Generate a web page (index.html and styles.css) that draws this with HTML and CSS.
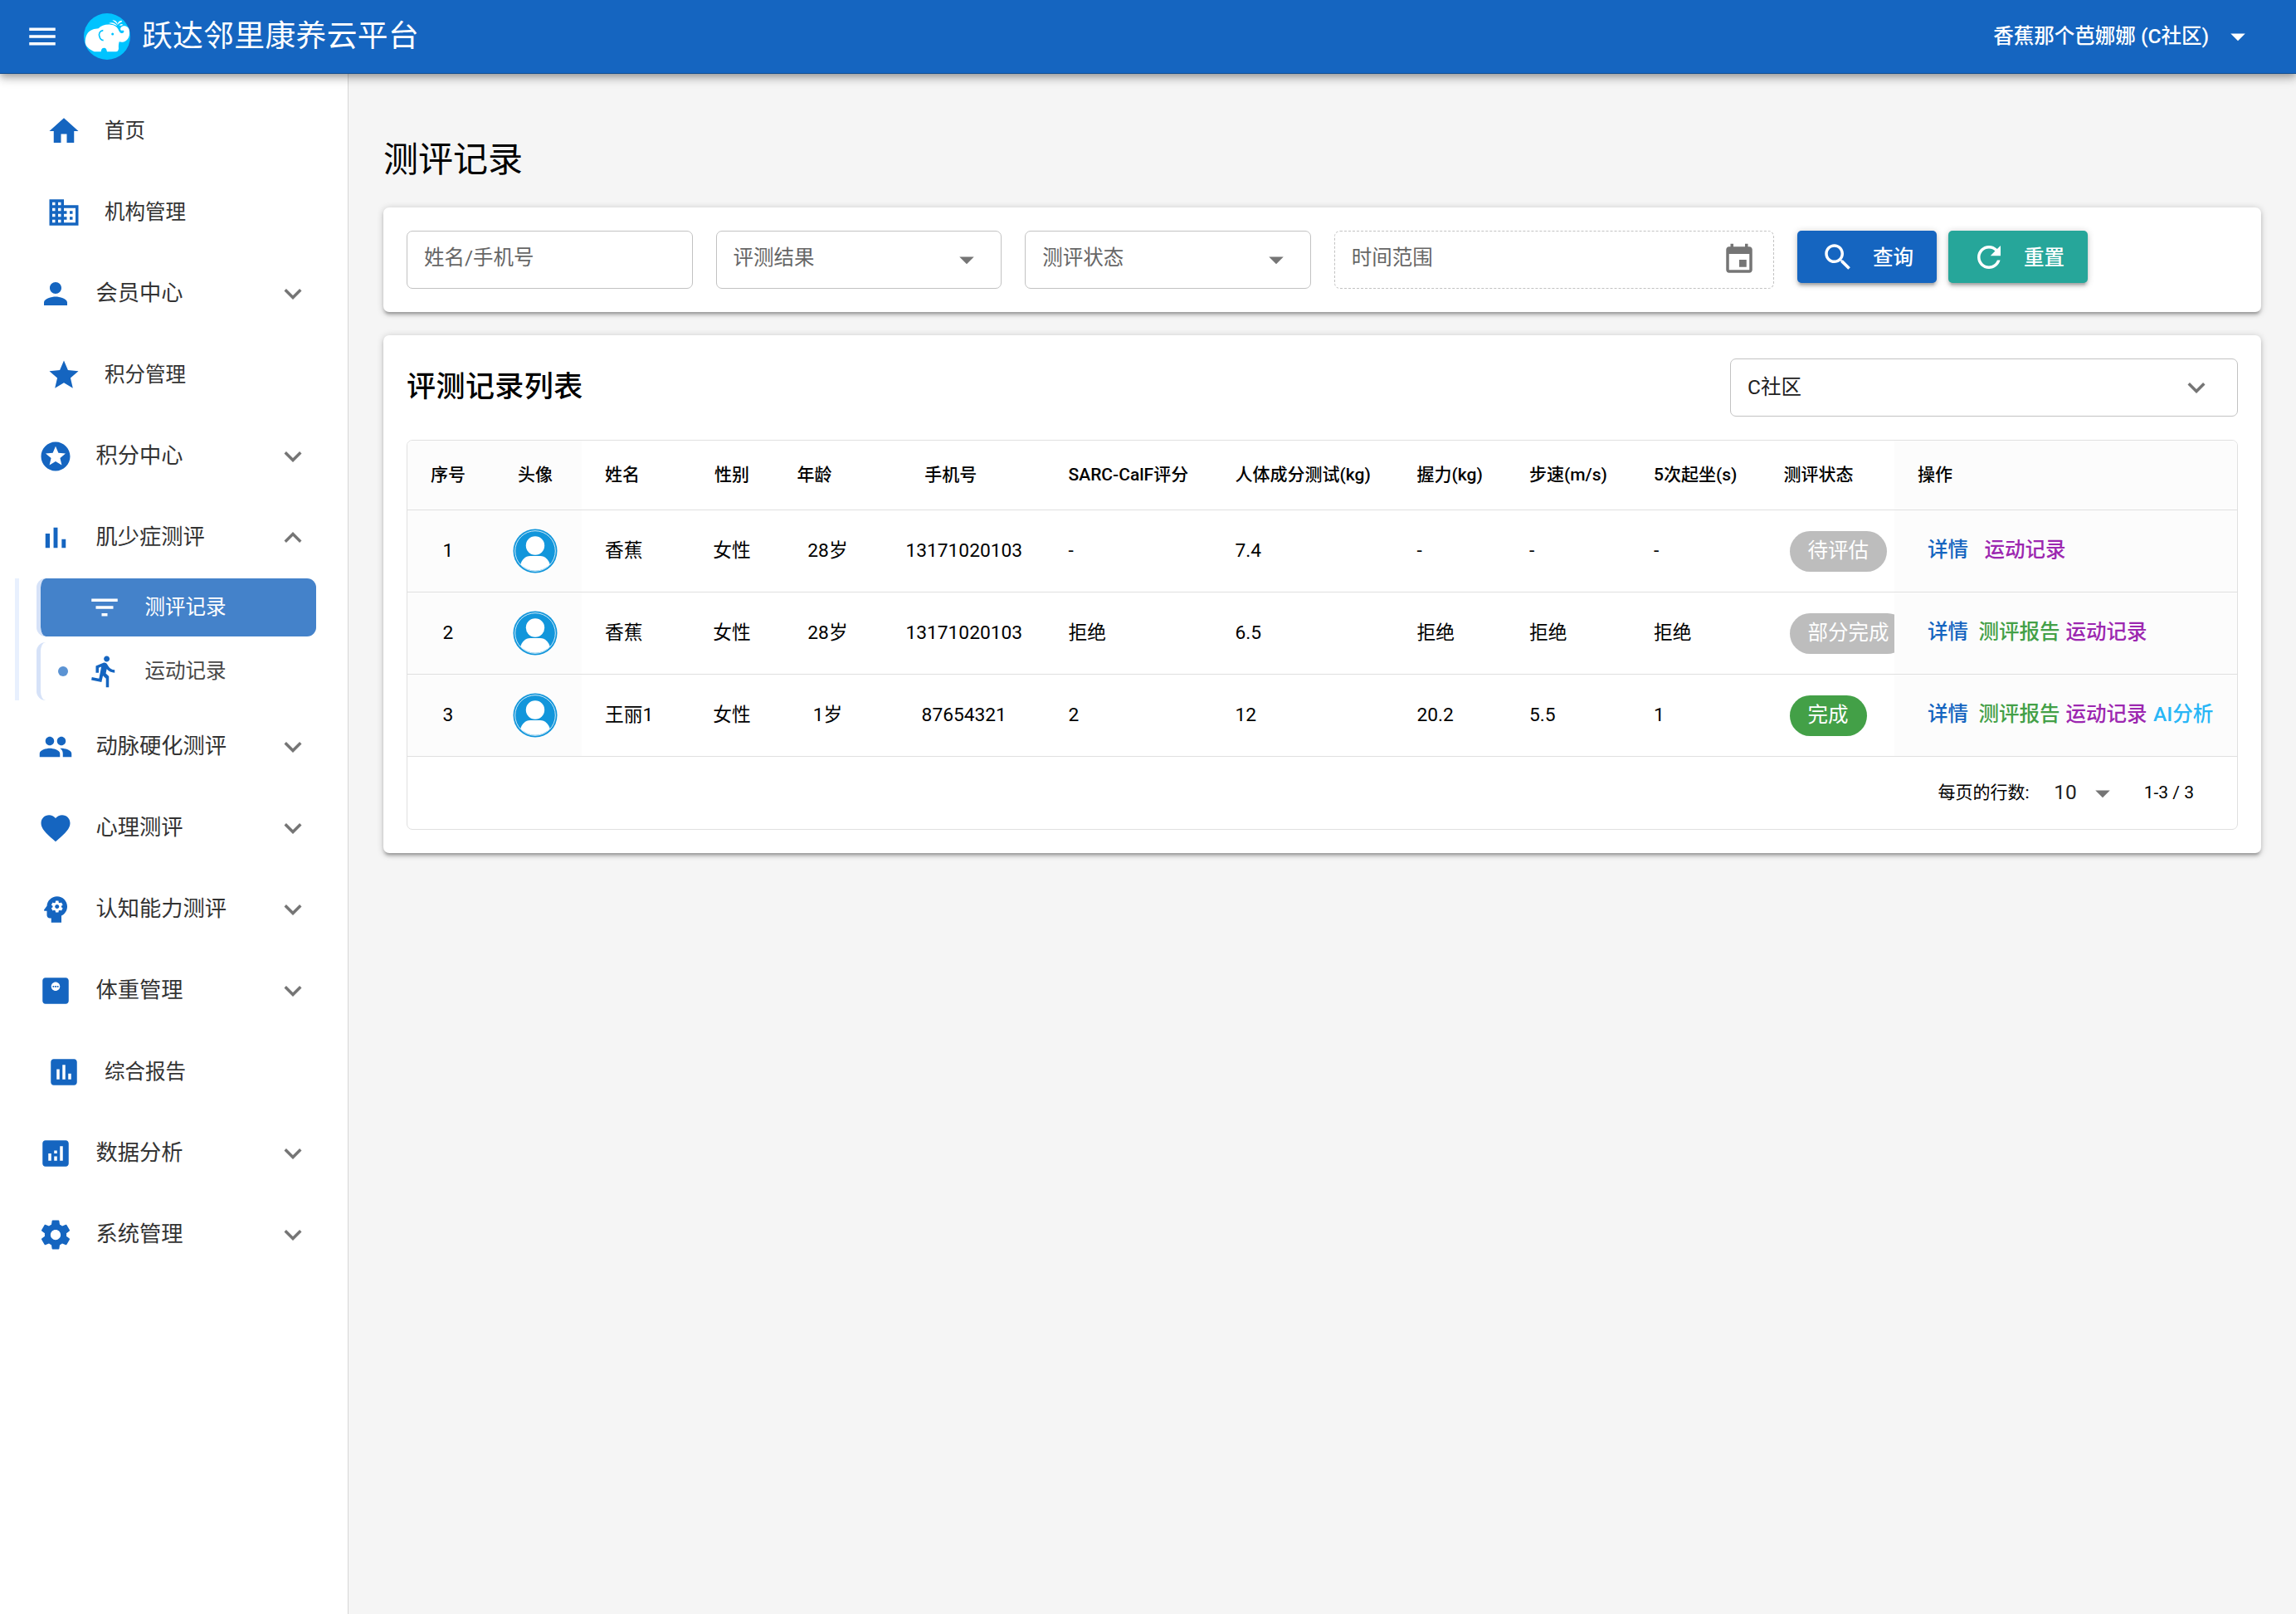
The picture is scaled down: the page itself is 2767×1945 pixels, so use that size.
FILE: index.html
```html
<!DOCTYPE html>
<html lang="zh-CN">
<head>
    <meta charset="UTF-8">
    <meta name="viewport" content="width=device-width, initial-scale=1.0">
    <title>测评记录</title>
    <link rel="stylesheet" href="styles.css">
</head>
<body>
    <!-- Iconos -->
    <svg class="sprite" xmlns="http://www.w3.org/2000/svg">
        <symbol id="menu" viewBox="0 0 24 24"><path d="M3 18h18v-2H3v2zm0-5h18v-2H3v2zm0-7v2h18V6H3z"/></symbol>
        <symbol id="home" viewBox="0 0 24 24"><path d="M10 20v-6h4v6h5v-8h3L12 3 2 12h3v8z"/></symbol>
        <symbol id="domain" viewBox="0 0 24 24"><path d="M12 7V3H2v18h20V7H12zM6 19H4v-2h2v2zm0-4H4v-2h2v2zm0-4H4V9h2v2zm0-4H4V5h2v2zm4 12H8v-2h2v2zm0-4H8v-2h2v2zm0-4H8V9h2v2zm0-4H8V5h2v2zm10 12h-8v-2h2v-2h-2v-2h2v-2h-2V9h8v10zm-2-8h-2v2h2v-2zm0 4h-2v2h2v-2z"/></symbol>
        <symbol id="person" viewBox="0 0 24 24"><path d="M12 12c2.21 0 4-1.79 4-4s-1.79-4-4-4-4 1.79-4 4 1.79 4 4 4zm0 2c-2.67 0-8 1.34-8 4v2h16v-2c0-2.66-5.33-4-8-4z"/></symbol>
        <symbol id="star" viewBox="0 0 24 24"><path d="M12 17.27L18.18 21l-1.64-7.03L22 9.24l-7.19-.61L12 2 9.19 8.63 2 9.24l5.46 4.73L5.82 21z"/></symbol>
        <symbol id="stars" viewBox="0 0 24 24"><path d="M11.99 2C6.47 2 2 6.48 2 12s4.47 10 9.99 10C17.52 22 22 17.52 22 12S17.52 2 11.99 2zm4.24 16L12 15.45 7.77 18l1.12-4.81-3.73-3.23 4.92-.42L12 5l1.92 4.53 4.92.42-3.73 3.23L16.23 18z"/></symbol>
        <symbol id="bar_chart" viewBox="0 0 24 24"><path d="M5 9.2h3V19H5zM10.6 5h2.8v14h-2.8zm5.6 8H19v6h-2.8z"/></symbol>
        <symbol id="filter_list" viewBox="0 0 24 24"><path d="M10 18h4v-2h-4v2zM3 6v2h18V6H3zm3 7h12v-2H6v2z"/></symbol>
        <symbol id="run" viewBox="0 0 24 24"><path d="M13.49 5.48c1.1 0 2-.9 2-2s-.9-2-2-2-2 .9-2 2 .9 2 2 2zm-3.6 13.9l1-4.4 2.1 2v6h2v-7.5l-2.1-2 .6-3c1.3 1.5 3.3 2.5 5.5 2.5v-2c-1.9 0-3.5-1-4.3-2.4l-1-1.6c-.4-.6-1-1-1.7-1-.3 0-.5.1-.8.1l-5.2 2.2v4.7h2v-3.4l1.8-.7-1.6 8.1-4.9-1-.4 2 7 1.4z"/></symbol>
        <symbol id="people" viewBox="0 0 24 24"><path d="M16 11c1.66 0 2.99-1.34 2.99-3S17.66 5 16 5c-1.66 0-3 1.34-3 3s1.34 3 3 3zm-8 0c1.66 0 2.99-1.34 2.99-3S9.66 5 8 5C6.34 5 5 6.34 5 8s1.34 3 3 3zm0 2c-2.33 0-7 1.17-7 3.5V19h14v-2.5c0-2.33-4.67-3.5-7-3.5zm8 0c-.29 0-.62.02-.97.05 1.16.84 1.97 1.97 1.97 3.45V19h6v-2.5c0-2.33-4.67-3.5-7-3.5z"/></symbol>
        <symbol id="favorite" viewBox="0 0 24 24"><path d="M12 21.35l-1.45-1.32C5.4 15.36 2 12.28 2 8.5 2 5.42 4.42 3 7.5 3c1.74 0 3.41.81 4.5 2.09C13.09 3.81 14.76 3 16.5 3 19.58 3 22 5.42 22 8.5c0 3.78-3.4 6.86-8.55 11.54L12 21.35z"/></symbol>
        <symbol id="psychology" viewBox="0 0 24 24"><path d="M13 8.57c-.79 0-1.43.64-1.43 1.43s.64 1.43 1.43 1.43 1.43-.64 1.43-1.43-.64-1.43-1.43-1.43z"/><path d="M13 3C9.25 3 6.2 5.94 6.02 9.64L4.1 12.2c-.25.33-.01.8.4.8H6v3c0 1.1.9 2 2 2h1v3h7v-4.68c2.36-1.12 4-3.53 4-6.32 0-3.87-3.13-7-7-7zm3 7c0 .13-.01.26-.02.39l.83.66c.08.06.1.16.05.25l-.8 1.39c-.05.09-.16.12-.24.09l-.99-.4c-.21.16-.43.29-.67.39L14 13.83c-.01.1-.1.17-.2.17h-1.6c-.1 0-.18-.07-.2-.17l-.15-1.06c-.25-.1-.47-.23-.68-.39l-.99.4c-.09.03-.2 0-.25-.09l-.8-1.39c-.05-.08-.03-.19.05-.25l.84-.66c-.01-.13-.02-.26-.02-.39s.02-.27.04-.39l-.85-.66c-.08-.06-.1-.16-.05-.26l.8-1.38c.05-.09.15-.12.24-.09l1 .4c.2-.15.43-.29.67-.39L12 6.17c.02-.1.1-.17.2-.17h1.6c.1 0 .18.07.2.17l.15 1.06c.24.1.46.23.67.39l1-.4c.09-.03.2 0 .24.09l.8 1.38c.05.09.03.2-.05.26l-.85.66c.03.12.04.25.04.39z"/></symbol>
        <symbol id="weight" viewBox="0 0 24 24"><path d="M19 3H5c-1.1 0-2 .9-2 2v14c0 1.1.9 2 2 2h14c1.1 0 2-.9 2-2V5c0-1.1-.9-2-2-2zm-7 9c-1.66 0-3-1.34-3-3s1.34-3 3-3 3 1.34 3 3-1.34 3-3 3z"/><path d="M10 8.5h1v1h-1zM11.5 8.5h1v1h-1zM13 8.5h1v1h-1z"/></symbol>
        <symbol id="assessment" viewBox="0 0 24 24"><path d="M19 3H5c-1.1 0-2 .9-2 2v14c0 1.1.9 2 2 2h14c1.1 0 2-.9 2-2V5c0-1.1-.9-2-2-2zM9 17H7v-7h2v7zm4 0h-2V7h2v10zm4 0h-2v-4h2v4z"/></symbol>
        <symbol id="analytics" viewBox="0 0 24 24"><path d="M19 3H5c-1.1 0-2 .9-2 2v14c0 1.1.9 2 2 2h14c1.1 0 2-.9 2-2V5c0-1.1-.9-2-2-2zM9 17H7v-5h2v5zm4 0h-2v-3h2v3zm0-5h-2v-2h2v2zm4 5h-2V7h2v10z"/></symbol>
        <symbol id="settings" viewBox="0 0 24 24"><path d="M19.43 12.98c.04-.32.07-.64.07-.98s-.03-.66-.07-.98l2.11-1.65c.19-.15.24-.42.12-.64l-2-3.46c-.12-.22-.39-.3-.61-.22l-2.49 1c-.52-.4-1.08-.73-1.69-.98l-.38-2.65C14.46 2.18 14.25 2 14 2h-4c-.25 0-.46.18-.49.42l-.38 2.65c-.61.25-1.17.59-1.69.98l-2.49-1c-.23-.09-.49 0-.61.22l-2 3.46c-.13.22-.07.49.12.64l2.11 1.65c-.04.32-.07.65-.07.98s.03.66.07.98l-2.11 1.65c-.19.15-.24.42-.12.64l2 3.46c.12.22.39.3.61.22l2.49-1c.52.4 1.08.73 1.69.98l.38 2.65c.03.24.24.42.49.42h4c.25 0 .46-.18.49-.42l.38-2.65c.61-.25 1.17-.59 1.69-.98l2.49 1c.23.09.49 0 .61-.22l2-3.46c.12-.22.07-.49-.12-.64l-2.11-1.65zM12 15.5c-1.93 0-3.5-1.57-3.5-3.5s1.57-3.5 3.5-3.5 3.5 1.57 3.5 3.5-1.57 3.5-3.5 3.5z"/></symbol>
        <symbol id="expand" viewBox="0 0 24 24"><path d="M7.41 8.59L12 13.17l4.59-4.58L18 10l-6 6-6-6z"/></symbol>
        <symbol id="caret" viewBox="0 0 24 24"><path d="M7 10l5 5 5-5z"/></symbol>
        <symbol id="event" viewBox="0 0 24 24"><path d="M17 12h-5v5h5v-5zM16 1v2H8V1H6v2H5c-1.11 0-1.99.9-1.99 2L3 19c0 1.1.89 2 2 2h14c1.1 0 2-.9 2-2V5c0-1.1-.9-2-2-2h-1V1h-2zm3 18H5V8h14v11z"/></symbol>
        <symbol id="search" viewBox="0 0 24 24"><path d="M15.5 14h-.79l-.28-.27C15.41 12.59 16 11.11 16 9.5 16 5.91 13.09 3 9.5 3S3 5.91 3 9.5 5.91 16 9.5 16c1.61 0 3.09-.59 4.23-1.57l.27.28v.79l5 4.99L20.49 19l-4.99-5zm-6 0C7.01 14 5 11.99 5 9.5S7.01 5 9.5 5 14 7.01 14 9.5 11.99 14 9.5 14z"/></symbol>
        <symbol id="refresh" viewBox="0 0 24 24"><path d="M17.65 6.35C16.2 4.9 14.21 4 12 4c-4.42 0-7.99 3.58-7.99 8s3.57 8 7.99 8c3.73 0 6.84-2.55 7.73-6h-2.08c-.82 2.33-3.04 4-5.65 4-3.31 0-6-2.69-6-6s2.69-6 6-6c1.66 0 3.14.69 4.22 1.78L13 11h7V4l-2.35 2.35z"/></symbol>
        <symbol id="avatar" viewBox="0 0 54 54">
            <circle cx="27" cy="27" r="26.5" fill="#1296db"/>
            <circle cx="27" cy="27" r="24.3" fill="none" stroke="#fff" stroke-width=".8"/>
            <circle cx="27" cy="20.5" r="11.2" fill="#fff"/>
            <path d="M9.3 43.2C10.5 38 15 33 21 33h12c6 0 10.5 5 11.7 10.2A24.3 24.3 0 0 1 9.3 43.2z" fill="#fff"/>
        </symbol>
    </svg>

    <div class="header">
        <svg class="icon menu-btn"><use href="#menu"/></svg>
        <svg class="logo" viewBox="11 13 168 168">
            <circle cx="95" cy="97" r="84" fill="#00c3ff"/>
            <path fill="#fff" d="M16 119C16 96 24 78 42 72c8-3 15-2 22-4 9-10 26-16 44-14 14 1 22 7 27 16 3 7 6 14 12 15 6 1 10-3 9-8-1-4-9 1-12-4-3-7 4-14 13-14 10 0 19 7 19 20 2 20-8 36-24 38-6 1-10-1-13-1-2 8-3 16-2 24-1 8-3 12-10 12H95c-2-11-5-14-11-14s-10 4-11 14H49C31 144 18 134 16 119z"/>
            <path fill="none" stroke="#00c3ff" stroke-width="5" d="M81 75C68 76 64 87 68 98c2 8 7 12 14 13"/>
            <circle cx="115" cy="88" r="4.5" fill="#00c3ff"/>
            <path fill="#fff" d="M101 49c12-5 24 0 31 10-10-5-19-9-31-10zM114 38c10-2 19 7 20 18-6-8-11-12-20-18zM134 54c-1-8 5-16 15-14 2 6-9 5-15 14zM139 58c3-7 9-8 14-4-5 5-9 2-14 4z"/>
        </svg>
        <div class="title">跃达邻里康养云平台</div>
        <div class="user">香蕉那个芭娜娜 (C社区)</div>
        <svg class="icon"><use href="#caret"/></svg>
    </div>

    <div class="layout">
        <div class="sidebar">
            <a class="item single"><svg class="icon"><use href="#home"/></svg><span>首页</span></a>
            <a class="item single"><svg class="icon"><use href="#domain"/></svg><span>机构管理</span></a>
            <a class="item"><svg class="icon"><use href="#person"/></svg><span>会员中心</span><svg class="icon arrow"><use href="#expand"/></svg></a>
            <a class="item single"><svg class="icon"><use href="#star"/></svg><span>积分管理</span></a>
            <a class="item"><svg class="icon"><use href="#stars"/></svg><span>积分中心</span><svg class="icon arrow"><use href="#expand"/></svg></a>
            <a class="item"><svg class="icon"><use href="#bar_chart"/></svg><span>肌少症测评</span><svg class="icon arrow open"><use href="#expand"/></svg></a>
            <div class="submenu">
                <a class="subitem active"><svg class="icon"><use href="#filter_list"/></svg><span>测评记录</span></a>
                <a class="subitem"><i class="dot"></i><svg class="icon"><use href="#run"/></svg><span>运动记录</span></a>
            </div>
            <a class="item"><svg class="icon"><use href="#people"/></svg><span>动脉硬化测评</span><svg class="icon arrow"><use href="#expand"/></svg></a>
            <a class="item"><svg class="icon"><use href="#favorite"/></svg><span>心理测评</span><svg class="icon arrow"><use href="#expand"/></svg></a>
            <a class="item"><svg class="icon"><use href="#psychology"/></svg><span>认知能力测评</span><svg class="icon arrow"><use href="#expand"/></svg></a>
            <a class="item"><svg class="icon"><use href="#weight"/></svg><span>体重管理</span><svg class="icon arrow"><use href="#expand"/></svg></a>
            <a class="item single"><svg class="icon"><use href="#assessment"/></svg><span>综合报告</span></a>
            <a class="item"><svg class="icon"><use href="#analytics"/></svg><span>数据分析</span><svg class="icon arrow"><use href="#expand"/></svg></a>
            <a class="item"><svg class="icon"><use href="#settings"/></svg><span>系统管理</span><svg class="icon arrow"><use href="#expand"/></svg></a>
        </div>

        <div class="content">
            <h1>测评记录</h1>

            <div class="card filters">
                <div class="field"><span>姓名/手机号</span></div>
                <div class="field"><span>评测结果</span><svg class="icon"><use href="#caret"/></svg></div>
                <div class="field"><span>测评状态</span><svg class="icon"><use href="#caret"/></svg></div>
                <div class="field date"><span>时间范围</span><svg class="icon"><use href="#event"/></svg></div>
                <div class="buttons">
                    <button class="btn search"><svg class="icon"><use href="#search"/></svg><span>查询</span></button>
                    <button class="btn reset"><svg class="icon"><use href="#refresh"/></svg><span>重置</span></button>
                </div>
            </div>

            <div class="card list">
                <div class="list-top">
                    <h2>评测记录列表</h2>
                    <div class="field community"><span>C社区</span><svg class="icon"><use href="#expand"/></svg></div>
                </div>
                <div class="table-box">
                    <table>
                        <colgroup>
                            <col class="c-no"><col class="c-avatar"><col class="c-name"><col class="c-sex"><col class="c-age"><col class="c-phone"><col class="c-sarc"><col class="c-body"><col class="c-grip"><col class="c-speed"><col class="c-sit"><col class="c-status"><col class="c-action">
                        </colgroup>
                        <thead>
                            <tr>
                                <th class="center fixed">序号</th>
                                <th class="center fixed">头像</th>
                                <th>姓名</th>
                                <th class="center">性别</th>
                                <th class="center sortable">年龄</th>
                                <th class="center sortable">手机号</th>
                                <th>SARC-CalF评分</th>
                                <th>人体成分测试(kg)</th>
                                <th>握力(kg)</th>
                                <th>步速(m/s)</th>
                                <th>5次起坐(s)</th>
                                <th>测评状态</th>
                                <th class="fixed">操作</th>
                            </tr>
                        </thead>
                        <tbody>
                            <tr>
                                <td class="center fixed">1</td>
                                <td class="center fixed"><svg class="avatar"><use href="#avatar"/></svg></td>
                                <td>香蕉</td>
                                <td class="center">女性</td>
                                <td class="center">28岁</td>
                                <td class="center">13171020103</td>
                                <td>-</td>
                                <td>7.4</td>
                                <td>-</td>
                                <td>-</td>
                                <td>-</td>
                                <td class="status"><span class="chip">待评估</span></td>
                                <td class="fixed"><div class="actions"><a class="detail">详情</a><a class="sport wide">运动记录</a></div></td>
                            </tr>
                            <tr>
                                <td class="center fixed">2</td>
                                <td class="center fixed"><svg class="avatar"><use href="#avatar"/></svg></td>
                                <td>香蕉</td>
                                <td class="center">女性</td>
                                <td class="center">28岁</td>
                                <td class="center">13171020103</td>
                                <td>拒绝</td>
                                <td>6.5</td>
                                <td>拒绝</td>
                                <td>拒绝</td>
                                <td>拒绝</td>
                                <td class="status"><span class="chip">部分完成</span></td>
                                <td class="fixed"><div class="actions"><a class="detail">详情</a><a class="report">测评报告</a><a class="sport">运动记录</a></div></td>
                            </tr>
                            <tr>
                                <td class="center fixed">3</td>
                                <td class="center fixed"><svg class="avatar"><use href="#avatar"/></svg></td>
                                <td>王丽1</td>
                                <td class="center">女性</td>
                                <td class="center">1岁</td>
                                <td class="center">87654321</td>
                                <td>2</td>
                                <td>12</td>
                                <td>20.2</td>
                                <td>5.5</td>
                                <td>1</td>
                                <td class="status"><span class="chip done">完成</span></td>
                                <td class="fixed"><div class="actions"><a class="detail">详情</a><a class="report">测评报告</a><a class="sport">运动记录</a><a class="ai">AI分析</a></div></td>
                            </tr>
                        </tbody>
                    </table>
                    <div class="pager">
                        <span>每页的行数:</span>
                        <span class="size">10</span>
                        <svg class="icon"><use href="#caret"/></svg>
                        <span class="range">1-3 / 3</span>
                    </div>
                </div>
            </div>
        </div>
    </div>
</body>
</html>
```

FILE: styles.css
```css
html, body {
    margin: 0;
    height: 100%;
    font-family: Roboto, "Noto Sans CJK SC", sans-serif;
    font-size: 24.5px;
    line-height: 1.5;
    background: #f5f5f5;
    color: #000;
}
body {
    display: flex;
    flex-direction: column;
    overflow: hidden;
}
.sprite {
    position: absolute;
    width: 0;
    height: 0;
}
.icon {
    width: 42px;
    height: 42px;
    flex: none;
    fill: currentColor;
}

/* Header */
.header {
    display: flex;
    align-items: center;
    height: 89px;
    flex: none;
    box-sizing: border-box;
    padding: 0 49px 0 29.5px;
    border-bottom: 1px solid #104c90;
    box-shadow: 0 3.5px 7px -1px rgba(0, 0, 0, 0.2), 0 7px 9px rgba(0, 0, 0, 0.14), 0 2px 17px rgba(0, 0, 0, 0.12);
    background: #1565c0;
    color: #fff;
    z-index: 2;
}
.logo {
    width: 56px;
    height: 56px;
    margin-left: 29.5px;
}
.title {
    flex: 1;
    margin-left: 14px;
    font-size: 36.75px;
    letter-spacing: 0.37px;
}
.user {
    font-weight: 500;
    margin-right: 14px;
}

.layout {
    display: flex;
    flex: 1;
}

/* Sidebar */
.sidebar {
    width: 420px;
    flex: none;
    box-sizing: border-box;
    padding-top: 20px;
    background: #fff;
    border-right: 1px solid #d6d6d6;
    color: #333;
}
.item {
    display: flex;
    align-items: center;
    height: 98px;
    padding: 0 45.5px 0 45.5px;
    font-size: 26.25px;
}
.item .icon {
    color: #1565c0;
}
.item span {
    flex: 1;
    margin-left: 28px;
}
.item .arrow {
    color: #757575;
}
.arrow.open {
    transform: rotate(180deg);
}
.single {
    padding-left: 56px;
    font-size: 24.5px;
}
.single span {
    margin-left: 28px;
}
.submenu {
    margin: 0 38px 7px 18px;
    border-left: 5px solid #e8f0fe;
    padding-left: 21px;
    display: flex;
    flex-direction: column;
    gap: 7px;
}
.subitem {
    display: flex;
    align-items: center;
    height: 70px;
    padding-left: 55.5px;
    border-left: 5px solid #d6e2f8;
    border-radius: 11px;
    color: #484848;
    position: relative;
}
.subitem .icon {
    color: #1565c0;
}
.subitem span {
    margin-left: 28px;
}
.subitem.active {
    background: #4482ca;
    background-clip: padding-box;
    color: #fff;
}
.subitem.active .icon {
    color: #fff;
}
.dot {
    position: absolute;
    left: 21px;
    top: 29px;
    width: 12px;
    height: 12px;
    border-radius: 50%;
    background: #5b93d3;
}

/* Contenido */
.content {
    flex: 1;
    padding: 0 42px;
}
h1 {
    margin: 72px 0 26px;
    font-size: 42px;
    font-weight: 400;
    line-height: 63px;
}
.card {
    background: #fff;
    border-radius: 7px;
    box-shadow: 0 1.75px 8.75px rgba(0, 0, 0, 0.2), 0 3.5px 3.5px rgba(0, 0, 0, 0.14), 0 5.25px 1.75px -3.5px rgba(0, 0, 0, 0.12);
    padding: 28px;
}
.filters {
    display: flex;
    align-items: flex-start;
    gap: 28px;
    margin-bottom: 28px;
}
.field {
    display: flex;
    align-items: center;
    justify-content: space-between;
    width: 344.6px;
    height: 70px;
    flex: none;
    box-sizing: border-box;
    padding: 0 20px;
    border: 1px solid #c2c2c2;
    border-radius: 7px;
    color: #666;
}
.field span {
    padding-bottom: 4px;
}
.field .icon {
    color: #757575;
}
.date {
    width: 530.3px;
    border-style: dashed;
}
.buttons {
    display: flex;
    gap: 14px;
}
.btn {
    display: flex;
    align-items: center;
    gap: 21px;
    width: 168px;
    height: 63px;
    padding: 0 28px;
    border: none;
    border-radius: 5px;
    color: #fff;
    font: 500 24.5px Roboto, "Noto Sans CJK SC", sans-serif;
    white-space: nowrap;
    box-shadow: 0 1.75px 8.75px rgba(0, 0, 0, 0.2), 0 3.5px 3.5px rgba(0, 0, 0, 0.14), 0 5.25px 1.75px -3.5px rgba(0, 0, 0, 0.12);
}
.btn span {
    padding-bottom: 3px;
}
.search {
    background: #1565c0;
}
.reset {
    background: #26a69a;
}
.list-top {
    display: flex;
    justify-content: space-between;
    align-items: center;
    margin-bottom: 28px;
}
h2 {
    margin: 0;
    font-size: 35px;
    font-weight: 500;
    letter-spacing: 0.44px;
}
.community {
    width: 612px;
    padding-right: 28.5px;
    color: #212121;
}
.community span {
    padding-bottom: 0;
}

/* Tabla */
.table-box {
    border: 1px solid #e0e0e0;
    border-radius: 7px;
    overflow: hidden;
}
table {
    width: 100%;
    table-layout: fixed;
    border-collapse: separate;
    border-spacing: 0;
}
.c-no { width: 98px; }
.c-avatar { width: 112px; }
.c-name { width: 132px; }
.c-sex { width: 98px; }
.c-age { width: 133px; }
.c-phone { width: 195.5px; }
.c-sarc { width: 201px; }
.c-body { width: 219px; }
.c-grip { width: 135.5px; }
.c-speed { width: 150px; }
.c-sit { width: 156.5px; }
.c-status { width: 161.5px; }
th, td {
    box-sizing: border-box;
    padding: 0 0 0 28px;
    text-align: left;
    white-space: nowrap;
    border-bottom: 1px solid #e0e0e0;
    font-size: 22.75px;
}
th {
    height: 84px;
    font-size: 21px;
    font-weight: 500;
}
td {
    height: 99px;
}
.center {
    text-align: center;
    padding-left: 0;
}
.sortable {
    padding-right: 32px;
}
.fixed {
    background: #fcfcfc;
    position: relative;
}
.avatar {
    width: 54px;
    height: 54px;
    display: block;
    margin: 0 auto;
}
.status {
    padding-left: 35px;
    overflow: hidden;
}
.chip {
    display: inline-block;
    height: 49px;
    line-height: 47px;
    padding: 0 22px;
    border-radius: 24.5px;
    background: #bdbdbd;
    color: #fff;
    font-size: 24.5px;
    vertical-align: middle;
}
.chip.done {
    background: #43a047;
}
.actions {
    display: flex;
    padding: 0 0 1px 12px;
    font-size: 24.5px;
    font-weight: 500;
}
.detail { color: #1565c0; }
.report { color: #43a047; margin-left: 12.5px; }
.sport { color: #9c27b0; margin-left: 7px; }
.sport.wide { margin-left: 19.5px; }
.ai { color: #29b6f6; margin-left: 7.5px; }
.pager {
    display: flex;
    align-items: center;
    justify-content: flex-end;
    height: 87px;
    padding-right: 52px;
    font-size: 21px;
}
.pager .icon {
    color: #757575;
    margin-left: 10.5px;
}
.size {
    margin-left: 29.5px;
    font-size: 24.5px;
    color: #212121;
}
.range {
    margin-left: 28.5px;
}
```
